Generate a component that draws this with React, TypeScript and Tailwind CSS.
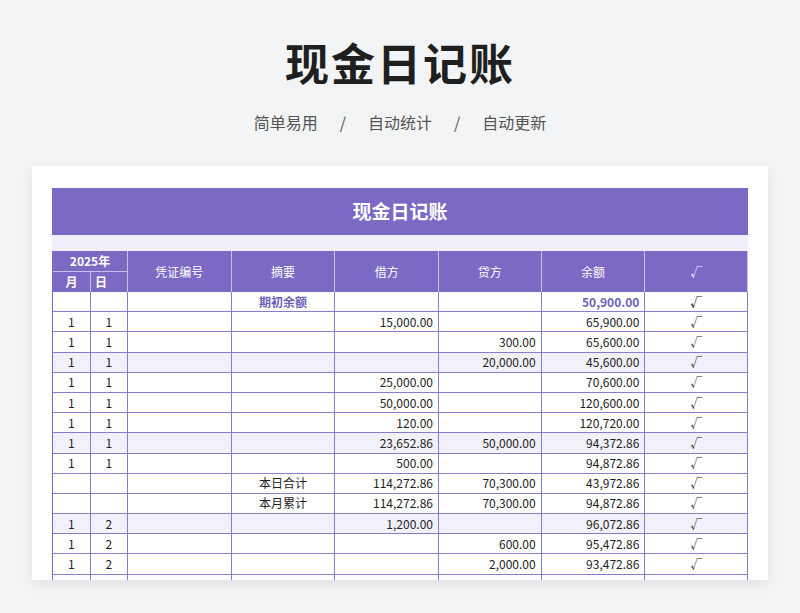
const rows: string[][] = [
  ["", "", "", "期初余额", "", "", "50,900.00", "√"],
  ["1", "1", "", "", "15,000.00", "", "65,900.00", "√"],
  ["1", "1", "", "", "", "300.00", "65,600.00", "√"],
  ["1", "1", "", "", "", "20,000.00", "45,600.00", "√"],
  ["1", "1", "", "", "25,000.00", "", "70,600.00", "√"],
  ["1", "1", "", "", "50,000.00", "", "120,600.00", "√"],
  ["1", "1", "", "", "120.00", "", "120,720.00", "√"],
  ["1", "1", "", "", "23,652.86", "50,000.00", "94,372.86", "√"],
  ["1", "1", "", "", "500.00", "", "94,872.86", "√"],
  ["", "", "", "本日合计", "114,272.86", "70,300.00", "43,972.86", "√"],
  ["", "", "", "本月累计", "114,272.86", "70,300.00", "94,872.86", "√"],
  ["1", "2", "", "", "1,200.00", "", "96,072.86", "√"],
  ["1", "2", "", "", "", "600.00", "95,472.86", "√"],
  ["1", "2", "", "", "", "2,000.00", "93,472.86", "√"],
  ["", "", "", "", "", "", "", ""],
];
const widths = [38, 38, 105, 105, 105, 104, 105, 104];
const font = { fontFamily: '"Noto Sans CJK SC", "Noto Sans", sans-serif' };

export default function App() {
  return (
    <div className="w-[800px] h-[613px] bg-[#f3f4f6] overflow-hidden relative" style={font}>
      <div className="h-[166px] flex flex-col items-center">
        <div className="mt-[34px] text-[44px] leading-[56px] font-bold text-[#1f1f1f] tracking-[2px]">现金日记账</div>
        <div className="mt-[20px] text-[16px] text-[#555] flex gap-[22px]">
          <span>简单易用</span><span>/</span><span>自动统计</span><span>/</span><span>自动更新</span>
        </div>
      </div>
      <div className="mx-[32px] h-[414px] bg-white shadow-[0_4px_12px_rgba(0,0,0,0.08)] pt-[22px] px-[20px] overflow-hidden">
        <div className="h-[47px] bg-[#7b69c4] flex items-center justify-center text-white text-[19px] font-bold">现金日记账</div>
        <div className="h-[16px] bg-[#f1effa]"></div>
        <div className="border-l border-[#7b69c4]">
          <div className="flex h-[41px] bg-[#7b69c4] text-white text-[12px]">
            <div className="w-[76px] flex flex-col border-r border-[#c9c0ec]">
              <div className="h-[21px] flex items-center justify-center font-bold border-b border-[#c9c0ec]">2025年</div>
              <div className="flex flex-1 font-bold">
                <div className="w-[38px] flex items-center justify-center border-r border-[#c9c0ec]">月</div>
                <div className="flex-1 flex items-center pl-[4px]">日</div>
              </div>
            </div>
            {["凭证编号", "摘要", "借方", "贷方", "余额", "√"].map((h, i) => (
              <div key={i} className="flex items-center justify-center border-r border-[#c9c0ec]" style={{ width: widths[i + 2] }}>{h}</div>
            ))}
          </div>
          {rows.map((r, ri) => (
            <div key={ri} className={`flex h-[20.2px] text-[12px] text-[#222] border-b border-[#8a7bcc] ${ri % 4 === 3 ? "bg-[#f2f0fa]" : "bg-white"}`}>
              {r.map((c, ci) => {
                const right = ci >= 4 && ci <= 6;
                const bold = ri === 0 && (ci === 3 || ci === 6);
                return (
                  <div key={ci} className={`flex items-center border-r border-[#8a7bcc] ${right ? "justify-end pr-[5px]" : "justify-center"} ${bold ? "font-bold text-[#6f5fb8]" : ""} ${ri === 0 && ci === 7 ? "font-bold" : ""}`} style={{ width: widths[ci] }}>{c}</div>
                );
              })}
            </div>
          ))}
        </div>
      </div>
    </div>
  );
}
